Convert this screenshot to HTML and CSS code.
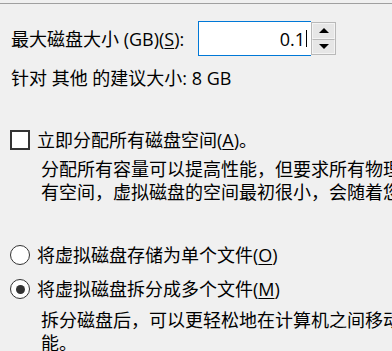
FILE: index.html
```html
<!DOCTYPE html>
<html>
<head lang="zh-CN">
    <meta charset="UTF-8">
    <title>磁盘容量</title>
    <link rel="stylesheet" href="styles.css">
</head>
<body>
<div class="topline"></div>
<div class="size-row">
    <label class="size-label">最大磁盘大小 (GB)(<u>S</u>):</label>
    <div class="size-box"><span class="size-val">0.1</span><span class="caret"></span></div>
    <div class="spin">
        <div class="spin-btn"><span class="arr-up"></span></div>
        <div class="spin-btn"><span class="arr-down"></span></div>
    </div>
</div>
<div class="hint">针对 其他 的建议大小: 8 GB</div>

<div class="opt opt-check">
    <span class="checkbox"></span>
    <span>立即分配所有磁盘空间(<u>A</u>)。</span>
</div>
<div class="desc desc-a">
    <p>分配所有容量可以提高性能，但要求所有物理</p>
    <p>有空间，虚拟磁盘的空间最初很小，会随着您</p>
</div>

<div class="opt opt-r1">
    <span class="radio"></span>
    <span>将虚拟磁盘存储为单个文件(<u>O</u>)</span>
</div>
<div class="opt opt-r2">
    <span class="radio on"></span>
    <span>将虚拟磁盘拆分成多个文件(<u>M</u>)</span>
</div>
<div class="desc desc-b">
    <p>拆分磁盘后，可以更轻松地在计算机之间移动</p>
    <p>能。</p>
</div>
</body>
</html>
```

FILE: styles.css
```css
*{
    margin:0;
    padding:0;
    box-sizing:border-box;
}
html,body{
    height:100%;
}
body{
    background:#f0f0f0;
    color:#000;
    font-family:"Segoe UI","Open Sans","Noto Sans CJK SC",sans-serif;
    font-size:18px;
    line-height:24px;
    overflow:hidden;
    white-space:nowrap;
}
u{
    text-decoration:underline;
    text-underline-offset:2px;
}
.topline{
    height:4px;
    border-bottom:1px solid #a0a0a0;
}

/* size row */
.size-row{
    display:flex;
    align-items:center;
    height:35px;
    margin-top:17px;
}
.size-label{
    flex:0 0 198px;
    padding-left:11px;
}
.size-box{
    flex:0 0 113px;
    height:35px;
    border:1px solid #0078d7;
    border-right:none;
    background:#fff;
    display:flex;
    align-items:center;
    justify-content:flex-end;
    padding-right:4px;
}
.caret{
    width:1px;
    height:17px;
    background:#000;
    margin-left:1px;
}
.spin{
    flex:0 0 25px;
    height:33px;
    border:1px solid #b9b9b9;
    display:flex;
    flex-direction:column;
}
.spin-btn{
    flex:1;
    background:#e6e6e6;
    border:1px solid #f4f4f4;
    display:flex;
    align-items:center;
    justify-content:center;
}
.spin-btn + .spin-btn{
    border-top:1px solid #b9b9b9;
}
.arr-up,.arr-down{
    width:0;
    height:0;
    border-left:5px solid transparent;
    border-right:5px solid transparent;
}
.arr-up{
    border-bottom:5px solid #000;
}
.arr-down{
    border-top:5px solid #000;
}

.hint{
    padding-left:11px;
    margin-top:10px;
}

/* options */
.opt{
    display:flex;
    align-items:center;
    gap:7px;
    padding-left:10px;
}
.opt-check{
    margin-top:38px;
}
.opt-r1{
    margin-top:39px;
}
.opt-r2{
    margin-top:10px;
}
.checkbox{
    width:20px;
    height:20px;
    border:2px solid #333;
    background:#fff;
}
.radio{
    width:20px;
    height:20px;
    border:1.5px solid #333;
    border-radius:50%;
    background:#fff;
    display:flex;
    align-items:center;
    justify-content:center;
}
.radio.on::after{
    content:"";
    width:9px;
    height:9px;
    border-radius:50%;
    background:#333;
}
.desc{
    padding-left:41px;
    line-height:23px;
}
.desc-a{
    margin-top:6px;
}
.desc-b{
    margin-top:8px;
}
```
